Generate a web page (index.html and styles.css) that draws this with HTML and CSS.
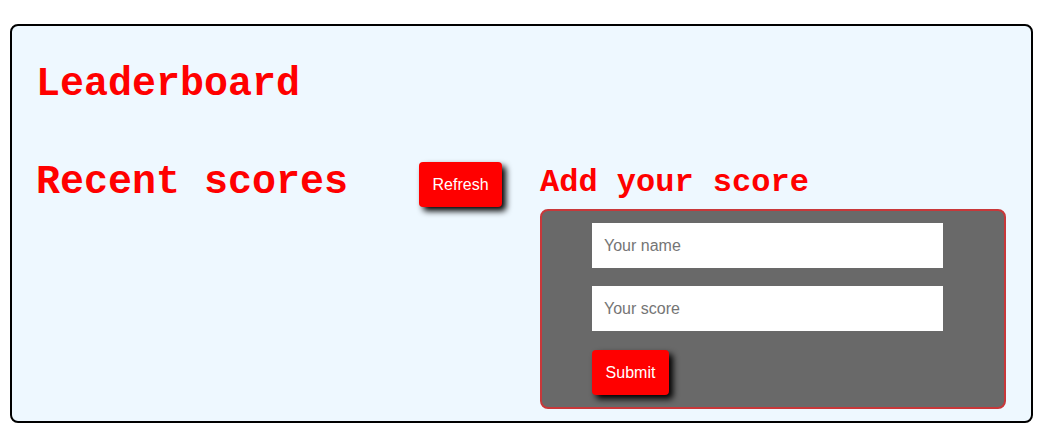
FILE: index.html
```html
<!DOCTYPE html>
<html>
<head>
<meta charset="utf-8">
<link rel="stylesheet" href="styles.css">
</head>
<body>
<div class="board">
  <h1 class="title">Leaderboard</h1>
  <div class="row">
    <div class="recent">
      <h2 class="recent-title">Recent scores</h2>
      <button class="btn refresh">Refresh</button>
    </div>
    <div class="add">
      <h3 class="add-title">Add your score</h3>
      <form class="score-form">
        <input class="field" type="text" placeholder="Your name">
        <input class="field" type="text" placeholder="Your score">
        <button class="btn submit" type="button">Submit</button>
      </form>
    </div>
  </div>
</div>
</body>
</html>
```
FILE: styles.css
```css
html, body {
  margin: 0;
  padding: 0;
  background: #ffffff;
}
body {
  padding: 24px 0 0 10px;
}
.board {
  box-sizing: border-box;
  width: 1023px;
  height: 399px;
  border: 2px solid #000;
  border-radius: 8px;
  background: #eef8ff;
  padding: 39px 25px 12px 24px;
}
.title, .recent-title, .add-title {
  font-family: "Courier New", "Nimbus Mono PS", "Nimbus Mono L", FreeMono, Courier, "Liberation Mono", monospace;
  font-weight: bold;
  color: #ff0000;
  margin: 0;
}
.title {
  font-size: 40px;
  line-height: 40px;
}
.row {
  display: flex;
  align-items: flex-start;
  margin-top: 57px;
}
.recent {
  width: 504px;
  display: flex;
  align-items: flex-start;
  gap: 71px;
  flex: none;
}
.recent-title {
  font-size: 40px;
  line-height: 40px;
  margin-top: 1px;
  white-space: nowrap;
}
.add {
  flex: 1;
}
.add-title {
  font-size: 32px;
  line-height: 32px;
  margin: 5px 0 10px 0;
}
.btn {
  height: 45px;
  padding: 0 13px;
  border: none;
  border-radius: 4px;
  background: #ff0000;
  color: #ffffff;
  font-family: "Liberation Sans", Arial, sans-serif;
  font-size: 16px;
  box-shadow: 4px 4px 6px #000;
}
.refresh {
  width: 83px;
}
.submit {
  width: 77px;
  margin-top: 1px;
}
.score-form {
  display: flex;
  flex-direction: column;
  align-items: flex-start;
  gap: 18px;
  background: #696969;
  border: 2px solid #c8383a;
  border-radius: 8px;
  padding: 12px 50px;
}
.field {
  box-sizing: border-box;
  width: 351px;
  height: 45px;
  border: none;
  padding: 0 12px;
  font-family: "Liberation Sans", Arial, sans-serif;
  font-size: 16px;
  background: #fff;
}
.field::placeholder {
  color: #757575;
}
```
